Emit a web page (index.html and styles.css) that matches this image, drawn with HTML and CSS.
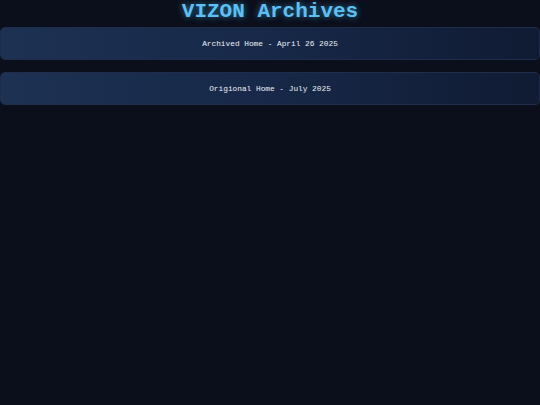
FILE: index.html
```html
<!DOCTYPE html>
<html>
<head>
<meta charset="utf-8">
<link rel="stylesheet" href="styles.css">
</head>
<body>
<h1 class="title">VIZON Archives</h1>
<div class="list">
  <a class="card" href="#">Archived Home - April 26 2025</a>
  <a class="card" href="#">Origional Home - July 2025</a>
</div>
</body>
</html>
```
FILE: styles.css
```css
html, body {
  margin: 0;
  padding: 0;
  background: #0b0f1b;
  font-family: "Liberation Mono", "DejaVu Sans Mono", monospace;
}
.title {
  margin: 0 0 3px;
  text-align: center;
  font-size: 21px;
  line-height: 24px;
  font-weight: bold;
  color: #5cc0f5;
  text-shadow: 0 0 6px rgba(79, 195, 247, 0.6);
}
.list {
  display: flex;
  flex-direction: column;
  gap: 12px;
}
.card {
  display: block;
  height: 33px;
  box-sizing: border-box;
  padding-top: 1px;
  line-height: 31px;
  text-align: center;
  font-size: 7.8px;
  color: #eef2f8;
  text-decoration: none;
  border: 1px solid #1f2d4a;
  border-radius: 5px;
  background: linear-gradient(90deg, #1d3152 0%, #172848 50%, #101b33 100%);
}
```
